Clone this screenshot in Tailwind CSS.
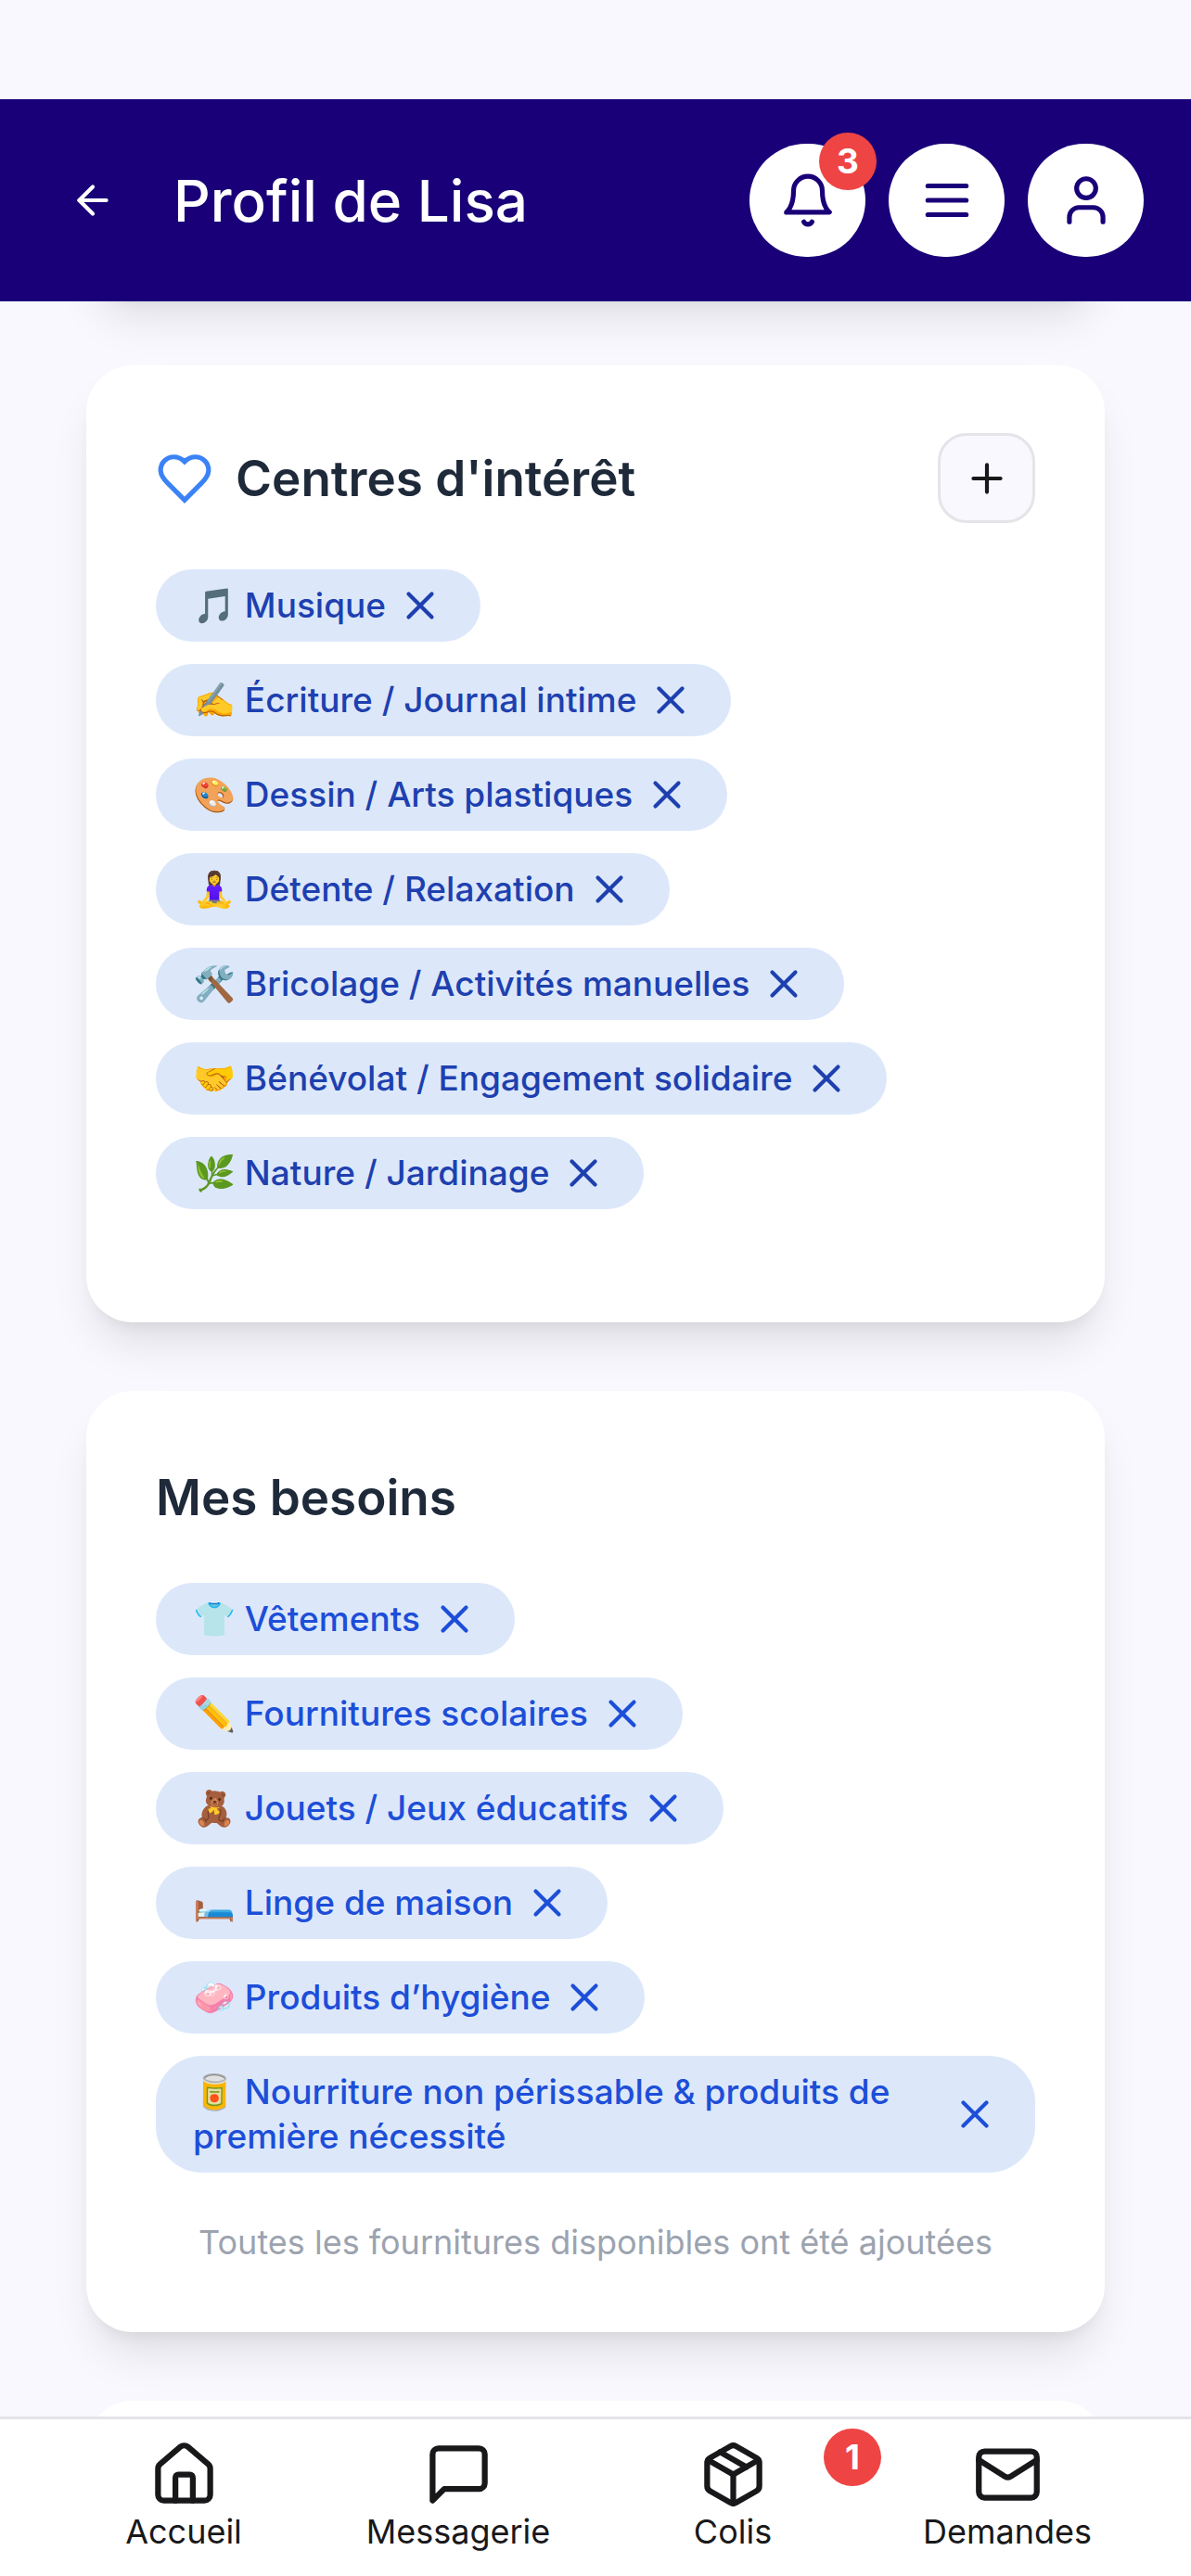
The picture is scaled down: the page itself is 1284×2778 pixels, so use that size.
<!doctype html>
<html lang="fr">
<head>
  <meta charset="UTF-8">
  <meta name="viewport" content="width=device-width, initial-scale=1.0">
  <title>Profil de Lisa</title>
  <script src="https://cdn.jsdelivr.net/npm/@tailwindcss/browser@4"></script>
</head>
<body class="bg-[#f8f8fe] font-['Inter','Noto_Sans',sans-serif]">
<div class="flex flex-col h-screen overflow-hidden pt-[107px]">

  <!-- header -->
  <header class="shrink-0 flex items-center h-[218px] pl-[75px] pr-[51px] bg-[#1a0078] text-white">
    <button aria-label="Retour">
      <svg class="size-[50px]" viewBox="0 0 24 24" fill="none" stroke="currentColor" stroke-width="2" stroke-linecap="round" stroke-linejoin="round"><path d="m12 19-7-7 7-7"/><path d="M19 12H5"/></svg>
    </button>
    <h1 class="ml-[62px] text-[62px] font-medium">Profil de Lisa</h1>
    <div class="ml-auto flex gap-[25px] text-[#1a0078]">
      <button class="relative flex items-center justify-center w-[125px] h-[122px] rounded-full bg-white" aria-label="Notifications">
        <svg class="size-[62px]" viewBox="0 0 24 24" fill="none" stroke="currentColor" stroke-width="2" stroke-linecap="round" stroke-linejoin="round"><path d="M6 8a6 6 0 0 1 12 0c0 7 3 9 3 9H3s3-2 3-9"/><path d="M10.3 21a1.94 1.94 0 0 0 3.4 0"/></svg>
        <span class="absolute -top-3 -right-3 flex items-center justify-center size-[62px] rounded-full bg-[#ef4444] text-white text-[37px] font-bold">3</span>
      </button>
      <button class="flex items-center justify-center w-[125px] h-[122px] rounded-full bg-white" aria-label="Menu">
        <svg class="size-[62px]" viewBox="0 0 24 24" fill="none" stroke="currentColor" stroke-width="2" stroke-linecap="round"><path d="M4 6h16"/><path d="M4 12h16"/><path d="M4 18h16"/></svg>
      </button>
      <button class="flex items-center justify-center w-[125px] h-[122px] rounded-full bg-white" aria-label="Mon compte">
        <svg class="size-[62px]" viewBox="0 0 24 24" fill="none" stroke="currentColor" stroke-width="2" stroke-linecap="round" stroke-linejoin="round"><path d="M19 21v-2a4 4 0 0 0-4-4H9a4 4 0 0 0-4 4v2"/><circle cx="12" cy="7" r="4"/></svg>
      </button>
    </div>
  </header>

  <!-- content -->
  <main class="flex-1 min-h-0 overflow-hidden flex flex-col gap-[74px] px-[93px]">
    <section class="shrink-0 -mt-[105px] h-[100px] rounded-[50px] bg-white shadow-[0_31px_47px_-9px_rgb(0_0_0/0.1),0_12px_19px_-12px_rgb(0_0_0/0.1)]"></section>

    <section class="shrink-0 px-[75px] pt-[73px] pb-[122px] rounded-[50px] bg-white shadow-[0_31px_47px_-9px_rgb(0_0_0/0.1),0_12px_19px_-12px_rgb(0_0_0/0.1)]">
      <div class="flex items-center mb-[50px]">
        <svg class="size-[62px] text-[#3b82f6]" viewBox="0 0 24 24" fill="none" stroke="currentColor" stroke-width="2"><path d="M19 14c1.49-1.46 3-3.21 3-5.5A5.5 5.5 0 0 0 16.5 3c-1.76 0-3 .5-4.5 2-1.5-1.5-2.74-2-4.5-2A5.5 5.5 0 0 0 2 8.5c0 2.3 1.5 4.05 3 5.5l7 7Z"/></svg>
        <h2 class="ml-6 text-[53px] leading-[84px] font-semibold text-gray-800">Centres d'intérêt</h2>
        <button class="ml-auto flex items-center justify-center w-[105px] h-[97px] rounded-[31px] border-[3px] border-[#e4e4e9] bg-[#f8f8fe] text-[#18181b]" aria-label="Ajouter">
          <svg class="size-[50px]" viewBox="0 0 24 24" fill="none" stroke="currentColor" stroke-width="2" stroke-linecap="round"><path d="M5 12h14"/><path d="M12 5v14"/></svg>
        </button>
      </div>
      <ul id="interets" class="flex flex-col items-start gap-6 text-[#1e40af]"></ul>
    </section>

    <section class="shrink-0 px-[75px] pt-[73px] pb-[73px] rounded-[50px] bg-white shadow-[0_31px_47px_-9px_rgb(0_0_0/0.1),0_12px_19px_-12px_rgb(0_0_0/0.1)]">
      <h2 class="mb-[50px] text-[53px] leading-[84px] font-semibold text-gray-800">Mes besoins</h2>
      <ul id="besoins" class="flex flex-col items-start gap-6 text-[#1d4ed8]"></ul>
      <p class="mt-[51px] text-[36px] leading-[48px] text-center text-[#9ca3af]">Toutes les fournitures disponibles ont été ajoutées</p>
    </section>

    <section class="shrink-0 h-[200px] rounded-[50px] bg-white"></section>
  </main>

  <!-- bottom nav -->
  <nav class="shrink-0 grid grid-cols-4 px-[50px] pt-[22px] pb-6 border-t-[3px] border-[#e4e4e9] bg-white text-[#18181b] text-[36px] leading-[48px]">
    <a href="#" class="flex flex-col items-center">
      <svg class="size-[75px]" viewBox="0 0 24 24" fill="none" stroke="currentColor" stroke-width="2" stroke-linecap="round" stroke-linejoin="round"><path d="M15 21v-8a1 1 0 0 0-1-1h-4a1 1 0 0 0-1 1v8"/><path d="M3 10a2 2 0 0 1 .709-1.528l7-5.999a2 2 0 0 1 2.582 0l7 5.999A2 2 0 0 1 21 10v9a2 2 0 0 1-2 2H5a2 2 0 0 1-2-2z"/></svg>
      Accueil
    </a>
    <a href="#" class="flex flex-col items-center">
      <svg class="size-[75px]" viewBox="0 0 24 24" fill="none" stroke="currentColor" stroke-width="2" stroke-linecap="round" stroke-linejoin="round"><path d="M21 15a2 2 0 0 1-2 2H7l-4 4V5a2 2 0 0 1 2-2h14a2 2 0 0 1 2 2z"/></svg>
      Messagerie
    </a>
    <a href="#" class="relative flex flex-col items-center">
      <svg class="size-[75px]" viewBox="0 0 24 24" fill="none" stroke="currentColor" stroke-width="2" stroke-linecap="round" stroke-linejoin="round"><path d="M11 21.73a2 2 0 0 0 2 0l7-4A2 2 0 0 0 21 16V8a2 2 0 0 0-1-1.73l-7-4a2 2 0 0 0-2 0l-7 4A2 2 0 0 0 3 8v8a2 2 0 0 0 1 1.73z"/><path d="M12 22V12"/><path d="m3.3 7 8.7 5 8.7-5"/><path d="m7.5 4.27 9 5.15"/></svg>
      Colis
      <span class="absolute -top-3 -right-3 flex items-center justify-center size-[62px] rounded-full bg-[#ef4444] text-white text-[37px] font-bold">1</span>
    </a>
    <a href="#" class="flex flex-col items-center">
      <svg class="size-[75px]" viewBox="0 0 24 24" fill="none" stroke="currentColor" stroke-width="2" stroke-linecap="round" stroke-linejoin="round"><rect width="20" height="16" x="2" y="4" rx="2"/><path d="m22 7-8.97 5.7a1.94 1.94 0 0 1-2.06 0L2 7"/></svg>
      Demandes
    </a>
  </nav>
</div>

<script>
let interets=['🎵 Musique','✍️ Écriture / Journal intime','🎨 Dessin / Arts plastiques','🧘‍♀️ Détente / Relaxation','🛠️ Bricolage / Activités manuelles','🤝 Bénévolat / Engagement solidaire','🌿 Nature / Jardinage']
let besoins=['👕 Vêtements','✏️ Fournitures scolaires','🧸 Jouets / Jeux éducatifs','🛏️ Linge de maison','🧼 Produits d’hygiène','🥫 Nourriture non périssable & produits de première nécessité']

function chips(id,items){
  document.getElementById(id).innerHTML=items.map((item)=>`<li class="flex items-center gap-3 px-10 py-[15px] rounded-[50px] bg-[#dce8fa] text-[37px] leading-[48px] font-medium">
    <span>${item.replace('&','&amp;')}</span>
    <button class="shrink-0 -my-px" aria-label="Retirer">
      <svg class="size-[50px]" viewBox="0 0 24 24" fill="none" stroke="currentColor" stroke-width="2" stroke-linecap="round"><path d="M18 6 6 18"/><path d="m6 6 12 12"/></svg>
    </button>
  </li>`).join('')
}

chips('interets',interets)
chips('besoins',besoins)
</script>
</body>
</html>
